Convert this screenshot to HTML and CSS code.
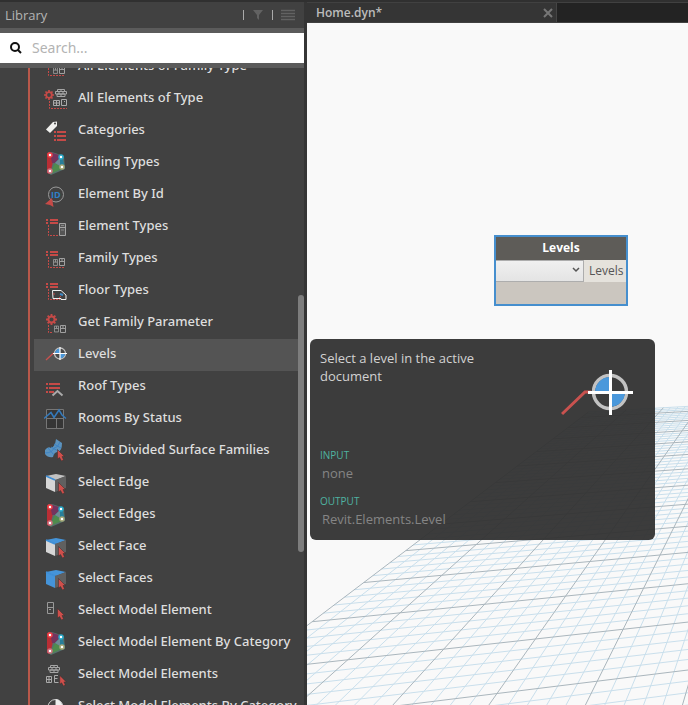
FILE: index.html
```html
<!DOCTYPE html>
<html lang="en">
<head>
<meta charset="utf-8">
<title>Home.dyn</title>
<link rel="stylesheet" href="styles.css">
</head>
<body>
<svg class="symbols" aria-hidden="true">
  <defs>
    <symbol id="cursor" viewBox="0 0 8 12"><path d="M.5.5v9.500l2-1.500 2 3.500 2-1-1.500-3.500h2.500z" fill="#cf4f4b" stroke="#3a2e2e" stroke-width=".5"/></symbol>
    <symbol id="gear" viewBox="0 0 10 10"><circle cx="5" cy="5" r="2.800" fill="none" stroke="#c64a47" stroke-width="1.800"/><path d="M5 0v2M5 8v2M0 5h2M8 5h2M1.500 1.500l1.300 1.300M7.200 7.200l1.300 1.300M1.500 8.500l1.300-1.300M7.200 2.800l1.300-1.300" stroke="#c64a47" stroke-width="1.700"/></symbol>
    <symbol id="window" viewBox="0 0 6 8"><path d="M.5.5h5v7h-5zM.5 3.500h5M3 .5v3" fill="none" stroke="#a0a0a0"/></symbol>
    <symbol id="bricks" viewBox="0 0 12 8"><path d="M2.500.5h7v2h-7zM.5 2.500h11v2.500H.5zM2 5h8v2.500H2zM6 .5v2M4 2.500V5M8 2.500V5M6 5v2.500" fill="none" stroke="#a5a5a5"/></symbol>
    <symbol id="redlist" viewBox="0 0 12 5"><path d="M0 1h2M4 1h8M0 4h2M4 4h8" stroke="#c64a47" stroke-width="2"/></symbol>
    <symbol id="family-type" viewBox="0 0 24 24"><use href="#redlist" x="2" y="4" width="12" height="5"/><path d="M4.500 10v10.500H21" fill="none" stroke="#c64a47" stroke-dasharray="2 1"/><use href="#window" x="9" y="12" width="5" height="7"/><use href="#window" x="15" y="11" width="6" height="8"/></symbol>
    <symbol id="all-elements" viewBox="0 0 24 24"><use href="#gear" x="0" y="3" width="10" height="10"/><use href="#bricks" x="11" y="2" width="12" height="8"/><path d="M5.500 14v7.500H23" fill="none" stroke="#c64a47" stroke-dasharray="2 1"/><path d="M9.500 13.500h6v5h-6zM9.500 16h6M12.500 13.500v5M17.500 12.500h5v6h-5zM20 14.500h1" fill="none" stroke="#aaa"/></symbol>
    <symbol id="categories" viewBox="0 0 24 24"><path d="M2 10.500L9 3l4-.5V7l-7 7z" fill="#f0f0ee"/><circle cx="11" cy="4.500" r="1" fill="#444"/><path d="M10 13h2M13 13h9M10 17h2M13 17h9M10 21h2M13 21h9" stroke="#c64a47" stroke-width="2"/></symbol>
    <symbol id="mesh" viewBox="0 0 24 24"><path d="M4 1h4l12 4 1 13-14 6-3-2V3z" fill="#56716c"/><path d="M3 2l3-1 3 10-3 12-3-1z" fill="#b92e35"/><path d="M6 1l12 4-7 7-3 0z" fill="#74345e"/><path d="M18 5l3 12-10-5z" fill="#287e99"/><path d="M11 12l9 5-14 6z" fill="#4f8b4d"/><path d="M11 12l5-5v8z" fill="#6f8b95"/><g fill="#fff" stroke-width="1.500"><circle cx="6" cy="4" r="2" stroke="#ee4047"/><circle cx="17" cy="6" r="2" stroke="#25a9c9"/><circle cx="18" cy="16" r="2" stroke="#a6a676"/><circle cx="6" cy="20" r="2" stroke="#cf7180"/></g></symbol>
    <symbol id="by-id" viewBox="0 0 24 24"><circle cx="12" cy="11.500" r="7.500" fill="none" stroke="#9a9a9a"/><text x="7" y="14.500" font-family="Open Sans,sans-serif" font-size="9" font-weight="700" fill="#2f80c8">ID</text><path d="M1 21l7-6 1.500 9-3.500-2z" fill="#c64a47"/></symbol>
    <symbol id="element-types" viewBox="0 0 24 24"><use href="#redlist" x="2" y="4" width="12" height="5"/><path d="M4.500 10v10.500h10" fill="none" stroke="#c64a47" stroke-dasharray="2 1"/><path d="M15.500 8.500h6v12h-6zM15.500 12.500h6" fill="#555" stroke="#a5a5a5"/><path d="M17 15h3M17 10.500h3" stroke="#888"/></symbol>
    <symbol id="floor-types" viewBox="0 0 24 24"><use href="#redlist" x="2" y="4" width="12" height="5"/><path d="M4.500 10v10.500H16" fill="none" stroke="#c64a47" stroke-dasharray="2 1"/><path d="M8.500 11.500h8.500l5 4.500v4.500h-5v-1H9z" fill="#404040" stroke="#eee"/><path d="M16 15l3 1" stroke="#3e8ac8" stroke-width="2"/><path d="M15 19l2-2M10 14v2" stroke="#c64a47"/></symbol>
    <symbol id="family-param" viewBox="0 0 24 24"><use href="#gear" x="2" y="3" width="11" height="11"/><path d="M4.500 14v7.500H9" fill="none" stroke="#c64a47" stroke-dasharray="2 1"/><use href="#window" x="10" y="14" width="5" height="8"/><use href="#window" x="16" y="14" width="6" height="8"/></symbol>
    <symbol id="level-small" viewBox="0 0 24 24"><path d="M2 17l7-6.500h2" fill="none" stroke="#c9524f" stroke-width="1.300"/><circle cx="16" cy="10.500" r="5.500" fill="#4a4a4a" stroke="#c2c2c2" stroke-width="1.300"/><path d="M16 10.500v-5a5 5 0 0 0-5 5zM16 10.500h5a5 5 0 0 1-5 5z" fill="#4a98db"/><path d="M9 10.500h14M16 4v13" stroke="#fff" stroke-width="1.200"/></symbol>
    <symbol id="level" viewBox="0 0 72 48"><path d="M1 45l23-22h6" fill="none" stroke="#c9524f" stroke-width="3"/><circle cx="49" cy="23" r="16.500" fill="none" stroke="#c2c2c2" stroke-width="3.500"/><path d="M49 23V8a15 15 0 0 0-15 15zM49 23h15a15 15 0 0 1-15 15z" fill="#4a98db"/><path d="M27 23.500h45M49.500 1v45" stroke="#fff" stroke-width="3"/></symbol>
    <symbol id="roof" viewBox="0 0 24 24"><path d="M2 9h2M5 9h11M2 13h2M5 13h11M2 17h2M5 17h5" stroke="#c64a47" stroke-width="2"/><path d="M8.500 20.500l5-4.500 5 4.500" fill="none" stroke="#aaa" stroke-width="2"/></symbol>
    <symbol id="rooms" viewBox="0 0 24 24"><path d="M2.500 2.500h17v19h-17zM2.500 11.500h17M12.500 11.500v10" fill="#363636" stroke="#777"/><path d="M0 11.500l7-6 3 5 5-7.500 3 5 4 3.500" fill="none" stroke="#347abc" stroke-width="1.500"/></symbol>
    <symbol id="surface" viewBox="0 0 24 24"><path d="M1 11q3-4 6-2 4-1 5-9l6 4q0 8-4 9-4 0-5 5-5 1-8-3z" fill="#5c93be"/><path d="M4 9l6 7M7 8l7 4M10 5l7 4M1 14q7 0 9-5 4 0 6-6" fill="none" stroke="#3d83c4"/><use href="#cursor" x="13" y="10" width="8" height="12"/></symbol>
    <symbol id="cube" viewBox="0 0 24 24"><path d="M2 5l10-2 10 2-10 4z" fill="var(--top)"/><path d="M2 5l9 4v12l-9-4z" fill="var(--front)"/><path d="M11 9l11-4v12l-11 4z" fill="#606060"/><path d="M2 5l9 4" stroke="#3f8fd7" stroke-width="1.500"/><use href="#cursor" x="14" y="11" width="8" height="12"/></symbol>
    <symbol id="model-element" viewBox="0 0 24 24"><path d="M3.500 3.500h6v11h-6zM3.500 8.500h6M5 10.500h2" fill="none" stroke="#999"/><use href="#cursor" x="13" y="9" width="8" height="12"/></symbol>
    <symbol id="model-elements" viewBox="0 0 24 24"><use href="#bricks" x="4" y="2" width="12" height="8"/><path d="M2.500 13.500h5v6h-5zM2.500 16.500h5M5 13.500v6M14 12.500h-3.500v7h4M10.500 15.500h3" fill="none" stroke="#aaa"/><use href="#cursor" x="15" y="12" width="8" height="11"/></symbol>
    <symbol id="globe" viewBox="0 0 24 24"><circle cx="11.500" cy="12" r="7.500" fill="#444" stroke="#ccc"/><path d="M11.500 4a8 8 0 0 1 7 8h-7z" fill="#eee"/></symbol>
  </defs>
</svg>
<div class="app">
  <aside class="library">
    <header class="library-head">
      <h1>Library</h1>
      <span class="bar"></span>
      <button aria-label="Filter"><svg width="12" height="12" viewBox="0 0 12 12"><path d="M1 1h10L7 6v5L5 9V6z" fill="#626262"/></svg></button>
      <span class="bar"></span>
      <button aria-label="View"><svg width="14" height="12" viewBox="0 0 14 12"><path d="M0 1.500h14M0 4.500h14M0 7.500h14M0 10.500h14" stroke="#626262" stroke-width="1.500"/></svg></button>
    </header>
    <label class="search">
      <svg width="14" height="14" viewBox="0 0 14 14"><circle cx="6" cy="6" r="4" fill="none" stroke="#111" stroke-width="2"/><path d="M9 9l3 3" stroke="#111" stroke-width="2"/></svg>
      <input type="text" placeholder="Search..." aria-label="Search">
    </label>
    <nav class="tree">
      <ul>
        <li><a href="#"><svg><use href="#family-type"/></svg>All Elements of Family Type</a></li>
        <li><a href="#"><svg><use href="#all-elements"/></svg>All Elements of Type</a></li>
        <li><a href="#"><svg><use href="#categories"/></svg>Categories</a></li>
        <li><a href="#"><svg><use href="#mesh"/></svg>Ceiling Types</a></li>
        <li><a href="#"><svg><use href="#by-id"/></svg>Element By Id</a></li>
        <li><a href="#"><svg><use href="#element-types"/></svg>Element Types</a></li>
        <li><a href="#"><svg><use href="#family-type"/></svg>Family Types</a></li>
        <li><a href="#"><svg><use href="#floor-types"/></svg>Floor Types</a></li>
        <li><a href="#"><svg><use href="#family-param"/></svg>Get Family Parameter</a></li>
        <li><a href="#" class="current"><svg><use href="#level-small"/></svg>Levels</a></li>
        <li><a href="#"><svg><use href="#roof"/></svg>Roof Types</a></li>
        <li><a href="#"><svg><use href="#rooms"/></svg>Rooms By Status</a></li>
        <li><a href="#"><svg><use href="#surface"/></svg>Select Divided Surface Families</a></li>
        <li><a href="#"><svg class="edge"><use href="#cube"/></svg>Select Edge</a></li>
        <li><a href="#"><svg><use href="#mesh"/></svg>Select Edges</a></li>
        <li><a href="#"><svg class="face"><use href="#cube"/></svg>Select Face</a></li>
        <li><a href="#"><svg class="faces"><use href="#cube"/></svg>Select Faces</a></li>
        <li><a href="#"><svg><use href="#model-element"/></svg>Select Model Element</a></li>
        <li><a href="#"><svg><use href="#mesh"/></svg>Select Model Element By Category</a></li>
        <li><a href="#"><svg><use href="#model-elements"/></svg>Select Model Elements</a></li>
        <li><a href="#"><svg><use href="#globe"/></svg>Select Model Elements By Category</a></li>
      </ul>
      <span class="thumb"></span>
    </nav>
  </aside>
  <main class="workspace">
    <div class="tabs">
      <div class="tab"><span>Home.dyn*</span><button aria-label="Close tab"><svg width="10" height="10" viewBox="0 0 10 10"><path d="M1 1l8 8M9 1L1 9" stroke="#777" stroke-width="2"/></svg></button></div>
    </div>
    <div class="canvas">
      <svg class="grid" aria-hidden="true"></svg>
      <section class="node">
        <h2>Levels</h2>
        <div class="ports">
          <div class="pick"><select aria-label="Level"><option></option></select><svg width="8" height="6" viewBox="0 0 8 6"><path d="M1 1l3 3 3-3" fill="none" stroke="#555" stroke-width="1.500"/></svg></div>
          <span class="port">Levels</span>
        </div>
      </section>
    </div>
  </main>
  <section class="tip" role="tooltip">
    <div class="tip-top">
      <p>Select a level in the active document</p>
      <svg width="72" height="48"><use href="#level"/></svg>
    </div>
    <dl>
      <dt>INPUT</dt><dd>none</dd>
      <dt>OUTPUT</dt><dd>Revit.Elements.Level</dd>
    </dl>
  </section>
</div>
<script src="grid.js"></script>
</body>
</html>
```
FILE: styles.css
```css
* { box-sizing: border-box; }
body { margin: 0; font-family: "Open Sans", "Noto Sans", sans-serif; background: #353535; }
h1, h2, p, ul, dl, dd { margin: 0; padding: 0; }
button { padding: 0; border: 0; background: none; display: flex; }
.symbols { position: absolute; width: 0; height: 0; }
.app { position: relative; display: flex; height: 100vh; overflow: hidden; border-top: 2px solid #303030; }
.library { flex: 0 0 307px; display: flex; flex-direction: column; min-height: 0; background: #414141; border-right: 3px solid #353535; }
.library-head { height: 26px; padding: 0 9px 0 5px; display: flex; align-items: center; gap: 8px; }
.library-head h1 { flex: 1; font-size: 13px; font-weight: 400; color: #b4b4b4; }
.library-head svg { display: block; }
.bar { width: 1px; height: 10px; background: #aaa; }
.search { height: 40px; padding: 0 9px; display: flex; align-items: center; gap: 9px; background: #fff; border: solid #5b5b5b; border-width: 5px 0; }
.search input { flex: 1; min-width: 0; border: 0; padding: 0 0 2px; outline: 0; font: 14px "Noto Sans", sans-serif; color: #333; }
.search input::placeholder { color: #b3b3b3; }
.tree { position: relative; flex: 1; min-height: 0; overflow: hidden; }
.tree ul { list-style: none; margin: -17px 0 0 28px; border-left: 2px solid #b9584a; }
.tree li { padding: 0 6px 0 4px; }
.tree a { display: flex; align-items: center; gap: 10px; height: 32px; padding: 0 0 4px 10px; color: #dedede; font: 500 13px "Noto Sans", sans-serif; text-decoration: none; white-space: nowrap; }
.tree a.current { background: #545454; }
.tree a svg { flex: none; width: 24px; height: 24px; margin-top: 4px; }
.edge, .face { --front: #d6d6d6; }
.edge { --top: #c2c2c2; }
.face, .faces { --top: #4594d9; }
.faces { --front: #4594d9; }
.thumb { position: absolute; right: 0; top: 227px; width: 6px; height: 257px; border-radius: 3px; background: #7d7d7d; }
.workspace { flex: 1; min-width: 0; display: flex; flex-direction: column; }
.tabs { height: 21px; display: flex; background: #232323; border-top: 1px solid #414141; border-bottom: 1px solid #414141; }
.tab { width: 250px; padding: 0 3px 0 9px; display: flex; align-items: center; justify-content: space-between; background: #353535; border-right: 1px solid #454545; font-size: 12px; font-weight: 600; color: #bcbcbc; }
.canvas { position: relative; flex: 1; overflow: hidden; background: #f9f9f9; }
.grid { position: absolute; inset: 0; width: 100%; height: 100%; }
.node { position: absolute; left: 187px; top: 212px; width: 134px; height: 71px; border: 2px solid #468fce; background: #cbc6bf; }
.node h2 { height: 23px; line-height: 22px; text-align: center; font-size: 12px; font-weight: 700; color: #fff; background: #5e5c58; }
.ports { display: flex; height: 22px; }
.pick { position: relative; flex: 1; }
.pick select { appearance: none; display: block; width: 100%; height: 100%; border: 1px solid #adadad; border-left: 0; border-radius: 0; background: linear-gradient(#f0f0f0, #e4e4e4); }
.pick svg { position: absolute; right: 4px; top: 7px; pointer-events: none; }
.port { width: 42px; padding-left: 5px; font-size: 12px; line-height: 22px; background: #e5e2dc; color: #555; }
.tip { position: absolute; left: 310px; top: 337px; width: 345px; height: 201px; padding: 10px; border-radius: 6px; background: rgba(50, 50, 50, .95); color: #d2d2d2; font-size: 13px; line-height: 18px; }
.tip-top { display: flex; justify-content: space-between; height: 98px; padding-right: 12px; }
.tip-top p { width: 180px; }
.tip-top svg { margin-top: 20px; }
.tip dt { color: #4fb3a1; font-size: 10px; line-height: 16px; }
.tip dd { padding: 1px 0 11px 2px; color: #858585; }
```
FILE: grid.js
```js
// Ground plane: a homography fitted to sample points [u, v, x, y],
// where u and v count major grid lines.
const samples = [
  [0,0,190,157],[1,0,425,135],[3,0,870,95],[4,0,1080,72],
  [0,1,35,275],[1,1,300,250],[2,1,552,224],[3,1,798,200],[4,1,1030,177],
  [1,2,145,388],[2,2,430,358],[3,2,705,327],[4,2,970,298],
  [3,3,592,490],[4,3,893,452],[0,-1,320,62]
].map(([u, v, x, y]) => [u, v, x / 3 - 7, y / 3 + 507]);

function fit(points) {
  const n = 8, m = Array.from({ length: n }, () => Array(n + 1).fill(0));
  const add = (row, rhs) => {
    for (let i = 0; i < n; i++) {
      for (let j = 0; j < n; j++) m[i][j] += row[i] * row[j];
      m[i][n] += row[i] * rhs;
    }
  };
  for (const [u, v, x, y] of points) {
    add([u, v, 1, 0, 0, 0, -u * x, -v * x], x);
    add([0, 0, 0, u, v, 1, -u * y, -v * y], y);
  }
  for (let i = 0; i < n; i++) {
    let p = i;
    for (let r = i; r < n; r++) if (Math.abs(m[r][i]) > Math.abs(m[p][i])) p = r;
    [m[i], m[p]] = [m[p], m[i]];
    for (let r = 0; r < n; r++) {
      if (r === i) continue;
      const f = m[r][i] / m[i][i];
      for (let c = i; c <= n; c++) m[r][c] -= f * m[i][c];
    }
  }
  return m.map((row, i) => row[n] / row[i]);
}

const h = fit(samples);
const project = (u, v) => {
  const w = h[6] * u + h[7] * v + 1;
  return [(h[0] * u + h[1] * v + h[2]) / w, (h[3] * u + h[4] * v + h[5]) / w];
};

// Line indices in minor steps, five to a major step.
const far = -48, near = 25, across = 50;
let minor = "", major = "";
const segment = (a, b) => `M${project(...a)}L${project(...b)}`;
for (let i = 0; i <= across; i++) {
  const d = segment([i / 5, far / 5], [i / 5, near / 5]);
  if (i % 5) minor += d; else major += d;
}
for (let i = far; i <= near; i++) {
  const d = segment([0, i / 5], [across / 5, i / 5]);
  if (i % 5) minor += d; else major += d;
}
document.querySelector(".grid").innerHTML =
  `<path d="${minor}" stroke="#c9dfec" fill="none"/><path d="${major}" stroke="#aab6bd" fill="none"/>`;
```
